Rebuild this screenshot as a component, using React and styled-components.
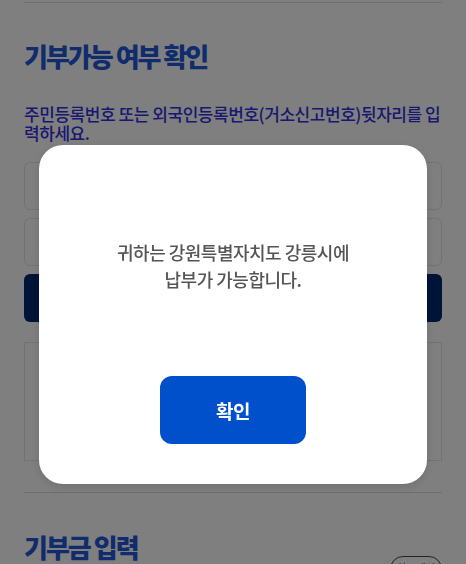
import React from "react";
import styled, { createGlobalStyle } from "styled-components";

const Global = createGlobalStyle`
  html, body { margin: 0; padding: 0; background: #fff; }
  body { font-family: "Noto Sans CJK KR", "Noto Sans", sans-serif; overflow: hidden; }
  * { box-sizing: border-box; }
`;

const Page = styled.div`
  width: 466px;
  height: 564px;
  padding: 2px 24px 0;
  overflow: hidden;
`;

const Divider = styled.div`
  height: 1px;
  background: #dedede;
`;

const Title = styled.h2`
  margin: ${p => p.$top || 36}px 0 0;
  font-size: 26px;
  line-height: 34px;
  font-weight: 900;
  color: #2258d8;
  letter-spacing: -2px;
`;

const Guide = styled.p`
  margin: 31px 0 0;
  font-size: 17px;
  line-height: 19px;
  font-weight: 500;
  color: #3030e0;
  letter-spacing: -0.45px;
`;

const Input = styled.div`
  height: 48px;
  margin-top: ${p => p.$top}px;
  border: 1px solid #e4e4e4;
  border-radius: 6px;
  display: flex;
  align-items: center;
  padding: 0 13px;
  font-size: 15px;
  color: #999;
`;

const Submit = styled.div`
  height: 48px;
  margin-top: 8px;
  border-radius: 6px;
  background: #00286e;
  display: flex;
  align-items: center;
  justify-content: center;
  color: #fff;
  font-size: 17px;
  font-weight: 700;
`;

const ResultBox = styled.div`
  height: 119px;
  margin-top: 20px;
  border: 1px solid #e4e4e4;
`;

const SecondDivider = styled(Divider)`
  margin-top: 31px;
`;

const TitleRow = styled.div`
  display: flex;
  justify-content: space-between;
  align-items: flex-start;
`;

const Pill = styled.div`
  margin-top: 63px;
  height: 26px;
  padding: 0 6px;
  border: 1.5px solid #444;
  border-radius: 13px;
  font-size: 11px;
  line-height: 23px;
  color: #444;
  white-space: nowrap;
  letter-spacing: -0.5px;
`;

const Overlay = styled.div`
  position: fixed;
  inset: 0;
  background: rgba(0, 0, 0, 0.5);
  display: flex;
  justify-content: center;
  align-items: flex-start;
  padding-top: 145px;
`;

const Modal = styled.div`
  width: 388px;
  height: 339px;
  background: #fff;
  border-radius: 24px;
  box-shadow: 0 3px 10px rgba(0, 0, 0, 0.12);
  display: flex;
  flex-direction: column;
  align-items: center;
  padding-top: 94px;
`;

const Message = styled.p`
  margin: 0;
  text-align: center;
  font-size: 18px;
  line-height: 27px;
  font-weight: 500;
  color: #555;
  letter-spacing: -0.5px;
`;

const Confirm = styled.button`
  margin-top: 83px;
  width: 146px;
  height: 68px;
  border: none;
  border-radius: 12px;
  background: #0050cc;
  color: #fff;
  font-family: inherit;
  font-size: 19px;
  font-weight: 700;
  letter-spacing: -0.5px;
`;

export default function App() {
  return (
    <>
      <Global />
      <Page>
        <Divider />
        <Title>기부가능 여부 확인</Title>
        <Guide>주민등록번호 또는 외국인등록번호(거소신고번호)뒷자리를 입력하세요.</Guide>
        <Input $top={20}>성명</Input>
        <Input $top={8}>주민등록번호 뒷자리</Input>
        <Submit>확인</Submit>
        <ResultBox />
        <SecondDivider />
        <TitleRow>
          <Title $top={37}>기부금 입력</Title>
          <Pill>한도계산</Pill>
        </TitleRow>
      </Page>
      <Overlay>
        <Modal>
          <Message>
            귀하는 강원특별자치도 강릉시에
            <br />
            납부가 가능합니다.
          </Message>
          <Confirm>확인</Confirm>
        </Modal>
      </Overlay>
    </>
  );
}
